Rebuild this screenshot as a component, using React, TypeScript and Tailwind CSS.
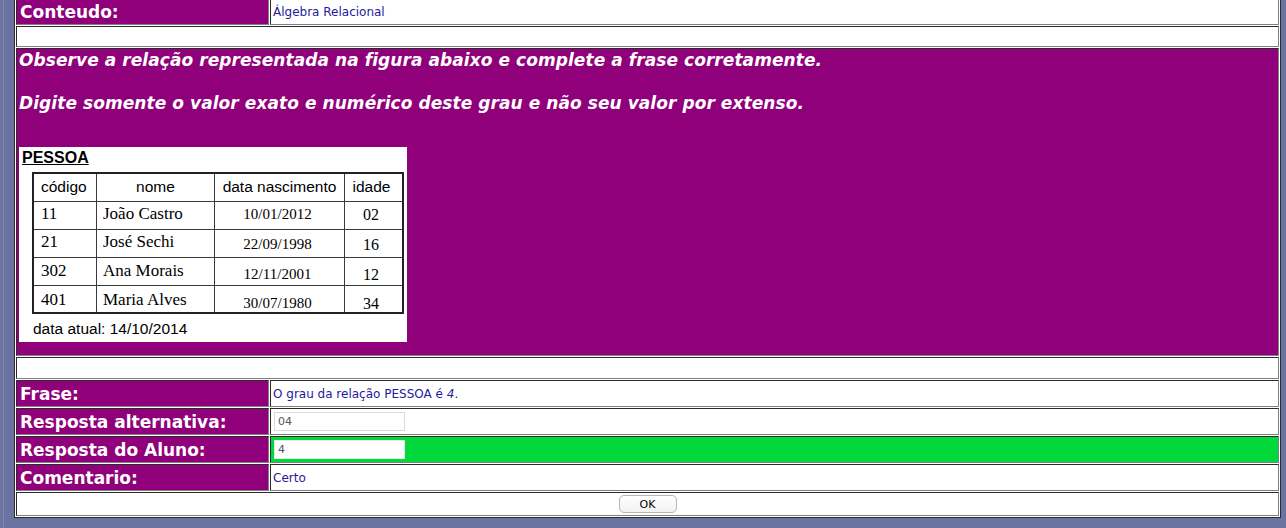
import React from "react";

const PURPLE = "bg-[#8f007a]";
const cellBorder =
  "border border-t-[#2b2b2b] border-l-[#2b2b2b] border-b-[#808080] border-r-[#808080]";

function LabelCell({ children }: { children: React.ReactNode }) {
  return (
    <div
      className={`w-[253px] shrink-0 ${PURPLE} ${cellBorder} flex items-center pl-[3px] text-white font-bold text-[17px] leading-[20px] whitespace-nowrap`}
    >
      {children}
    </div>
  );
}

function ValueCell({
  children,
  green,
}: {
  children?: React.ReactNode;
  green?: boolean;
}) {
  return (
    <div
      className={`flex-1 ${green ? "bg-[#00d83b]" : "bg-white"} ${cellBorder} flex items-center pl-[2px] text-[12px] leading-[14px] text-[#231a9c] whitespace-nowrap`}
    >
      {children}
    </div>
  );
}

const rows = [
  { code: "11", name: "João Castro", date: "10/01/2012", age: "02", pn: "pt-[2px]", pd: "pt-[4px]" },
  { code: "21", name: "José Sechi", date: "22/09/1998", age: "16", pn: "pt-[2px]", pd: "pt-[6px]" },
  { code: "302", name: "Ana Morais", date: "12/11/2001", age: "12", pn: "pt-[3px]", pd: "pt-[8px]" },
  { code: "401", name: "Maria Alves", date: "30/07/1980", age: "34", pn: "pt-[4px]", pd: "pt-[9px]" },
];

function PessoaFigure() {
  const sans = "font-['Liberation_Sans',Arial,sans-serif]";
  const serif = "font-['Liberation_Serif','Times_New_Roman',serif]";
  const lines = "border-r border-[#3a3a3a]";
  return (
    <div className={`w-[388px] h-[195px] bg-white text-black not-italic font-normal ${sans}`}>
      <div className="pt-[2px] pl-[3px] text-[16px] leading-[17px] font-bold underline">
        PESSOA
      </div>
      <div className="mt-[6px] ml-[13px] w-[372px] border-2 border-[#222] grid grid-cols-[63px_118px_130px_57px] grid-rows-[28px_28px_28px_28px_26px]">
        <div className={`${lines} border-b pl-[7px] pt-[4px] text-[15.5px] leading-[17px]`}>código</div>
        <div className={`${lines} border-b pt-[4px] text-center text-[15.5px] leading-[17px]`}>nome</div>
        <div className={`${lines} border-b pt-[4px] text-center text-[15.5px] leading-[17px]`}>data nascimento</div>
        <div className="border-b border-[#3a3a3a] pt-[4px] pr-[4px] text-center text-[15.5px] leading-[17px]">idade</div>
        {rows.map((r, i) => {
          const bb = i < rows.length - 1 ? "border-b" : "";
          return (
            <React.Fragment key={r.code}>
              <div className={`${lines} ${bb} ${serif} pl-[7px] ${r.pn} text-[17px] leading-[19px]`}>{r.code}</div>
              <div className={`${lines} ${bb} ${serif} pl-[6px] ${r.pn} text-[17px] leading-[19px]`}>{r.name}</div>
              <div className={`${lines} ${bb} ${serif} ${r.pd} text-center pr-[4px] text-[15px] leading-[17px]`}>{r.date}</div>
              <div className={`${bb} border-[#3a3a3a] ${serif} ${r.pd} text-center pr-[5px] text-[16px] leading-[17px]`}>{r.age}</div>
            </React.Fragment>
          );
        })}
      </div>
      <div className="mt-[6px] ml-[14px] text-[15.5px] leading-[18px]">data atual: 14/10/2014</div>
    </div>
  );
}

export default function App() {
  return (
    <div className="w-[1286px] h-[528px] overflow-hidden bg-[#6b74a0] flex items-start font-['DejaVu_Sans',Verdana,sans-serif]">
      <div className="w-[3px] h-full shrink-0" />
      <div className="w-[1px] h-full shrink-0 bg-[#7f88b1]" />
      <div className="w-[10px] h-full shrink-0" />
      <div className="w-[1267px] shrink-0 -mt-[4px] border border-[#2b2b2b] bg-white p-[1px] flex flex-col gap-[1px]">
        <div className="h-[27px] flex gap-[1px]">
          <LabelCell>Conteudo:</LabelCell>
          <ValueCell>Álgebra Relacional</ValueCell>
        </div>
        <div className={`h-[21px] bg-white ${cellBorder}`} />
        <div className={`h-[308px] ${PURPLE} ${cellBorder} pt-[1px] pl-[2px] text-white font-bold italic text-[17px] leading-[21.5px] tracking-[0.07px]`}>
          <div>Observe a relação representada na figura abaixo e complete a frase corretamente.</div>
          <div className="mt-[21.5px]">Digite somente o valor exato e numérico deste grau e não seu valor por extenso.</div>
          <div className="mt-[32px] tracking-normal">
            <PessoaFigure />
          </div>
        </div>
        <div className={`h-[22px] bg-white ${cellBorder}`} />
        <div className="h-[27px] flex gap-[1px]">
          <LabelCell>Frase:</LabelCell>
          <ValueCell>
            O grau da relação PESSOA é&nbsp;<i>4</i>.
          </ValueCell>
        </div>
        <div className="h-[27px] flex gap-[1px]">
          <LabelCell>Resposta alternativa:</LabelCell>
          <ValueCell>
            <input
              readOnly
              value="04"
              className="ml-[1px] w-[131px] h-[19px] border border-[#d9d9d9] bg-white pl-[3px] text-[11px] text-[#555] outline-none"
            />
          </ValueCell>
        </div>
        <div className="h-[27px] flex gap-[1px]">
          <LabelCell>Resposta do Aluno:</LabelCell>
          <ValueCell green>
            <input
              readOnly
              value="4"
              className="ml-[1px] w-[131px] h-[19px] border border-[#e8e8e8] bg-white pl-[3px] text-[11px] text-[#555] outline-none"
            />
          </ValueCell>
        </div>
        <div className="h-[27px] flex gap-[1px]">
          <LabelCell>Comentario:</LabelCell>
          <ValueCell>Certo</ValueCell>
        </div>
        <div className={`h-[24px] bg-white ${cellBorder} flex items-center justify-center`}>
          <button className="w-[58px] h-[18px] rounded-[5px] border border-[#b5b5b5] bg-gradient-to-b from-white to-[#f2f2f2] text-[11px] leading-none text-black">
            OK
          </button>
        </div>
      </div>
    </div>
  );
}
